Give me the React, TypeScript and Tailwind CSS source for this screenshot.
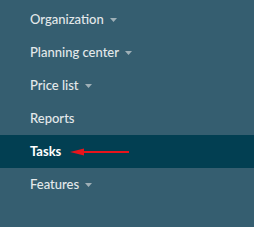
import { ReactNode } from 'react';

interface NavItemProps {
  label: string;
  dropdown?: boolean;
  active?: boolean;
  children?: ReactNode;
}

function Caret() {
  return (
    <svg className="ml-[6px] mt-[1px] w-[7px] h-[4px]" viewBox="0 0 7 4">
      <path d="M0 0 L7 0 L3.5 4 Z" fill="#9fb0b7" />
    </svg>
  );
}

function NavItem({ label, dropdown, active, children }: NavItemProps) {
  return (
    <div
      className={`flex items-center h-[33px] pl-[30px] ${
        active ? 'bg-[#023f52] text-white font-bold' : 'text-[#e4e9eb] font-medium'
      }`}
    >
      <span>{label}</span>
      {dropdown && <Caret />}
      {children}
    </div>
  );
}

export default function App() {
  return (
    <div
      className="w-[254px] h-[227px] bg-[#355e70] pt-[3px] text-[13px]"
      style={{ fontFamily: 'Lato, "Open Sans", sans-serif' }}
    >
      <NavItem label="Organization" dropdown />
      <NavItem label="Planning center" dropdown />
      <NavItem label="Price list" dropdown />
      <NavItem label="Reports" />
      <NavItem label="Tasks" active>
        {/* red annotation arrow */}
        <svg className="ml-[9px] w-[59px] h-[10px]" viewBox="0 0 59 10">
          <path d="M0 5 L14 1.5 L14 8.5 Z" fill="#e8141b" />
          <rect x="12" y="4" width="47" height="2" fill="#e8141b" />
        </svg>
      </NavItem>
      <NavItem label="Features" dropdown />
    </div>
  );
}
